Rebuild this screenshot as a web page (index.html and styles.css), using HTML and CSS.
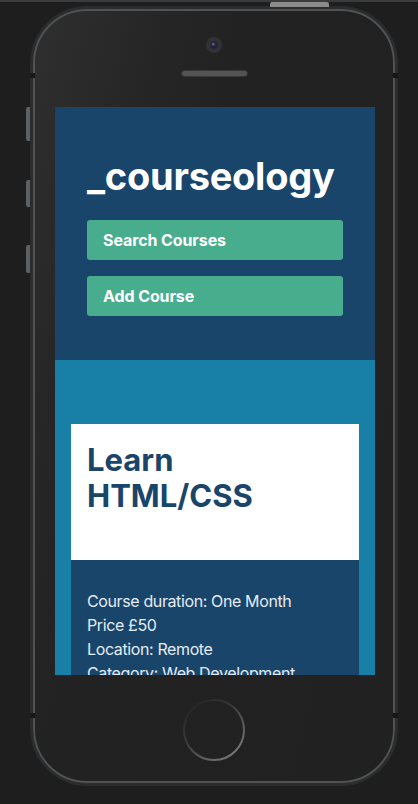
FILE: index.html
```html
<!DOCTYPE html>
<html lang="en">
<head>
<meta charset="utf-8">
<title>_courseology</title>
<link rel="stylesheet" href="styles.css">
</head>
<body>
  <div class="phone">
    <span class="btn-top"></span>
    <span class="btn-side s1"></span>
    <span class="btn-side s2"></span>
    <span class="btn-side s3"></span>
    <span class="notch nl1"></span>
    <span class="notch nr1"></span>
    <span class="notch nl2"></span>
    <span class="notch nr2"></span>
    <div class="camera"><span class="lens"></span></div>
    <div class="speaker"></div>
    <div class="screen">
      <header class="header">
        <h1 class="logo">_courseology</h1>
        <a class="action" href="#">Search Courses</a>
        <a class="action" href="#">Add Course</a>
      </header>
      <section class="courses">
        <article class="card">
          <div class="card-head">
            <h2 class="card-title">Learn HTML/CSS</h2>
          </div>
          <div class="card-body">
            <p class="line">Course duration: One Month</p>
            <p class="line">Price £50</p>
            <p class="line">Location: Remote</p>
            <p class="line">Category: Web Development</p>
          </div>
        </article>
      </section>
    </div>
    <div class="home">
      <svg width="64" height="64" viewBox="0 0 64 64">
        <defs>
          <linearGradient id="hg" x1="0.1" y1="0" x2="0.9" y2="1">
            <stop offset="0" stop-color="#222"/>
            <stop offset="0.4" stop-color="#3a3a3a"/>
            <stop offset="1" stop-color="#808080"/>
          </linearGradient>
        </defs>
        <circle cx="32" cy="32" r="30" fill="none" stroke="url(#hg)" stroke-width="2"/>
      </svg>
    </div>
  </div>
</body>
</html>
```

FILE: styles.css
```css
* { box-sizing: border-box; }

html, body { margin: 0; padding: 0; }

body {
  background: #1e1e1f;
  border-top: 2px solid #3b3b3c;
  min-height: 804px;
  font-family: "Inter", "Noto Sans", sans-serif;
}

.phone {
  position: relative;
  margin: 7px 0 0 33px;
  width: 362px;
  height: 774px;
  border: 2px solid #505253;
  border-radius: 54px;
  box-shadow: 0 0 0 3px #2b2c2d;
  background: linear-gradient(105deg, #2f2f2f 0%, #262626 22%, #222 38%, #212121 100%);
  display: flex;
  flex-direction: column;
  align-items: center;
}

.btn-top {
  position: absolute;
  left: 235px;
  top: -9px;
  width: 59px;
  height: 5px;
  background: #8a8a8a;
  border-radius: 2px 2px 0 0;
}

.btn-side {
  position: absolute;
  left: -9px;
  width: 4px;
  background: #5e5f60;
  border-radius: 2px 0 0 2px;
}
.s1 { top: 96px; height: 34px; }
.s2 { top: 169px; height: 27px; }
.s3 { top: 234px; height: 28px; }

.notch {
  position: absolute;
  width: 5px;
  height: 5px;
  background: #171717;
}
.nl1 { left: -5px; top: 62px; }
.nr1 { right: -5px; top: 62px; }
.nl2 { left: -5px; top: 702px; }
.nr2 { right: -5px; top: 702px; }

.camera {
  margin-top: 26px;
  width: 16px;
  height: 16px;
  border-radius: 50%;
  background: #323235;
  display: flex;
  align-items: center;
  justify-content: center;
}
.lens {
  width: 8px;
  height: 8px;
  border-radius: 50%;
  background: radial-gradient(circle at 40% 40%, #55557a 0 1px, #23233b 2px);
}

.speaker {
  margin-top: 17px;
  width: 67px;
  height: 7px;
  border-radius: 4px;
  background-color: #262626;
  background-image: radial-gradient(circle, #555 0.7px, transparent 1px);
  background-size: 2px 2px;
  border: 1px solid #383838;
}

.screen {
  margin-top: 30px;
  margin-left: 2px;
  width: 320px;
  height: 568px;
  overflow: hidden;
  background: #1880a6;
  display: flex;
  flex-direction: column;
}

.header {
  background: #19456b;
  padding: 47px 32px 44px;
  display: flex;
  flex-direction: column;
  gap: 16px;
}

.logo {
  margin: 0 0 5px;
  font-size: 38px;
  line-height: 45px;
  font-weight: 700;
  color: #fff;
  letter-spacing: -0.25px;
}

.action {
  display: flex;
  align-items: center;
  height: 40px;
  padding: 0 16px;
  background: #48ad8c;
  border-radius: 3px;
  color: #fff;
  font-size: 16px;
  font-weight: 700;
  letter-spacing: -0.1px;
  text-decoration: none;
}

.courses {
  padding: 64px 16px 0;
}

.card-head {
  background: #fff;
  padding: 18px 32px 46px 16px;
}

.card-title {
  margin: 0;
  font-size: 31px;
  line-height: 36px;
  font-weight: 700;
  color: #19456b;
}

.card-body {
  background: #19456b;
  padding: 29px 16px;
}

.line {
  margin: 0;
  font-size: 16px;
  line-height: 24px;
  color: #e4ecf3;
  letter-spacing: -0.38px;
}

.home {
  margin-top: 23px;
  width: 64px;
  height: 64px;
}
.home svg { display: block; }
```
